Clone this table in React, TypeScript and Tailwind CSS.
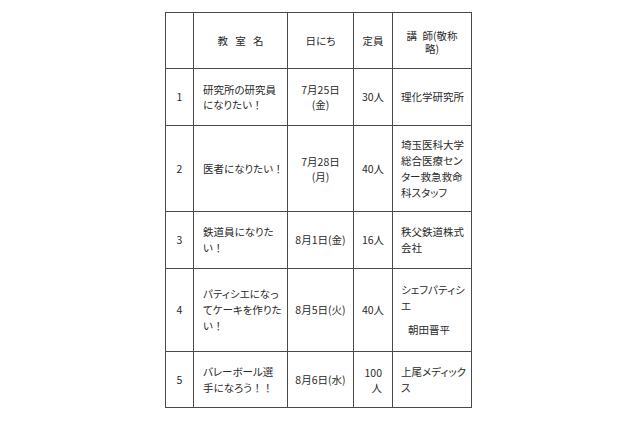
import React from "react";

const font = {
  fontFamily: '"Noto Sans CJK JP", "Noto Sans", sans-serif',
};

function Cell({
  children,
  className = "",
}: {
  children?: React.ReactNode;
  className?: string;
}) {
  return (
    <div className={`bg-white flex items-center ${className}`}>{children}</div>
  );
}

function Ex({ children }: { children: React.ReactNode }) {
  return <span className="[font-feature-settings:normal]">{children}</span>;
}

export default function App() {
  const c1 = "justify-center";
  const c2 = "justify-start pl-[9px]";
  const c3 = "justify-center text-center";
  const c4 = "justify-center text-center";
  const c5 = "justify-start pl-[8px]";
  return (
    <div className="w-[640px] h-[426px] bg-white pl-[165px] pt-[12px]" style={font}>
      <div className="inline-grid grid-cols-[27px_93px_65px_38px_78px] grid-rows-[55px_56px_85px_56px_82px_55px] gap-px p-px bg-[#4a4a4a] text-[10.5px] leading-[16px] text-[#2a2a2a] [font-feature-settings:'palt']">
        {/* header */}
        <Cell className={c1} />
        <Cell className="justify-center">
          <span className="[word-spacing:5px]">教 室 名</span>
        </Cell>
        <Cell className={c3}>日にち</Cell>
        <Cell className={c4}>定員</Cell>
        <Cell className="justify-center text-center leading-[13px] pt-[2px]">
          <div>
            <span className="[word-spacing:3px]">講 師</span>(敬称
            <br />
            略)
          </div>
        </Cell>

        {/* row 1 */}
        <Cell className={c1}>1</Cell>
        <Cell className={`${c2} leading-[15px]`}>
          <div>
            研究所の研究員
            <br />
            になりたい<Ex>！</Ex>
          </div>
        </Cell>
        <Cell className={`${c3} leading-[15px]`}>
          <div>
            7月25日
            <br />
            (金)
          </div>
        </Cell>
        <Cell className={c4}>30人</Cell>
        <Cell className={c5}>理化学研究所</Cell>

        {/* row 2 */}
        <Cell className={c1}>2</Cell>
        <Cell className={c2}>
          <span>
            医者になりたい<Ex>！</Ex>
          </span>
        </Cell>
        <Cell className={`${c3} leading-[15px]`}>
          <div>
            7月28日
            <br />
            (月)
          </div>
        </Cell>
        <Cell className={c4}>40人</Cell>
        <Cell className={c5}>
          <div>
            埼玉医科大学
            <br />
            総合医療セン
            <br />
            ター救急救命
            <br />
            科スタッフ
          </div>
        </Cell>

        {/* row 3 */}
        <Cell className={c1}>3</Cell>
        <Cell className={c2}>
          <div>
            鉄道員になりた
            <br />
            い<Ex>！</Ex>
          </div>
        </Cell>
        <Cell className={c3}>8月1日(金)</Cell>
        <Cell className={c4}>16人</Cell>
        <Cell className={c5}>
          <div>
            秩父鉄道株式
            <br />
            会社
          </div>
        </Cell>

        {/* row 4 */}
        <Cell className={c1}>4</Cell>
        <Cell className={c2}>
          <div>
            パティシエになっ
            <br />
            てケーキを作りた
            <br />
            い<Ex>！</Ex>
          </div>
        </Cell>
        <Cell className={c3}>8月5日(火)</Cell>
        <Cell className={c4}>40人</Cell>
        <Cell className={c5}>
          <div>
            <div>
              シェフパティシ
              <br />
              エ
            </div>
            <div className="mt-[8px] pl-[7px]">朝田晋平</div>
          </div>
        </Cell>

        {/* row 5 */}
        <Cell className={c1}>5</Cell>
        <Cell className={c2}>
          <div>
            バレーボール選
            <br />
            手になろう<Ex>！！</Ex>
          </div>
        </Cell>
        <Cell className={c3}>8月6日(水)</Cell>
        <Cell className="justify-end pr-[10px] text-right leading-[15px]">
          <div>
            100
            <br />
            人
          </div>
        </Cell>
        <Cell className={c5}>
          <div>
            上尾メディック
            <br />
            ス
          </div>
        </Cell>
      </div>
    </div>
  );
}
